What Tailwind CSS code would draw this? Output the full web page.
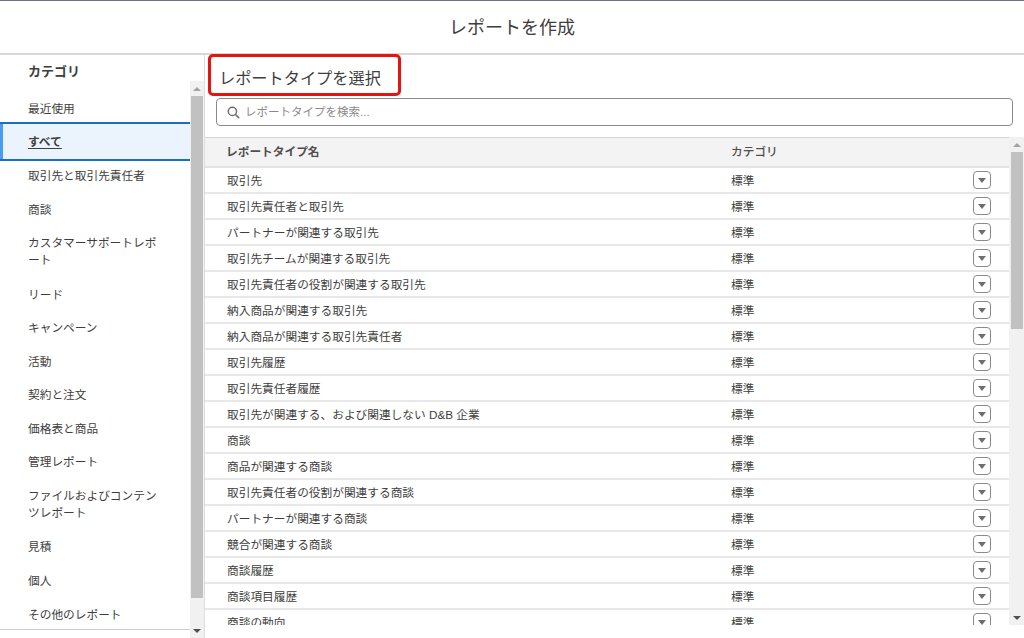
<!DOCTYPE html>
<html lang="ja">
<head>
  <meta charset="UTF-8" />
  <script src="https://cdn.jsdelivr.net/npm/@tailwindcss/browser@4"></script>
  <title>レポートを作成</title>
</head>
<body class="bg-white text-[#3e3e3c] text-[11.7px] font-['Liberation_Sans','Noto_Sans_CJK_JP',sans-serif]">
  <div class="relative w-[1024px] h-[638px] overflow-hidden flex flex-col">
    <!-- Header -->
    <header class="h-[55px] shrink-0 border-t border-t-[#6b7280] border-b-2 border-b-[#d8d8d8] flex items-center justify-center text-[18px] text-[#3e3e3c] pt-[2px]">レポートを作成</header>

    <div class="flex flex-1 min-h-0">
      <!-- Category sidebar -->
      <aside class="w-[205px] shrink-0 border-r border-[#dddddd] relative flex flex-col">
        <div class="w-[190px] h-[575px] border-b border-[#cccccc]">
          <div class="h-[34px] pl-[28px] flex items-center text-[13px] font-bold text-[#3e3e3c]">カテゴリ</div>
          <ul class="mt-[2px]">
            <li class="h-[31px] pl-[28px] pt-[5px] flex items-center">最近使用</li>
            <li class="h-[39px] pl-[28px] flex items-center bg-[#ebf3fc] border-y-2 border-[#1b6fc2] relative font-bold text-[#3e3e3c] underline underline-offset-2">
              <span class="absolute left-0 top-0 bottom-0 w-[3px] bg-[#4b9bf5]"></span>すべて
            </li>
            <li class="h-[33px] pl-[28px] pb-[4px] flex items-center">取引先と取引先責任者</li>
            <li class="h-[34px] pl-[28px] pb-[2px] flex items-center">商談</li>
            <li class="h-[50px] pl-[28px] pr-[28px] pb-[4px] flex items-center leading-[17px]">カスタマーサポートレポート</li>
            <li class="h-[34px] pl-[28px] flex items-center">リード</li>
            <li class="h-[33px] pl-[28px] pb-[2px] flex items-center">キャンペーン</li>
            <li class="h-[34px] pl-[28px] flex items-center">活動</li>
            <li class="h-[33px] pl-[28px] pb-[2px] flex items-center">契約と注文</li>
            <li class="h-[34px] pl-[28px] flex items-center">価格表と商品</li>
            <li class="h-[33px] pl-[28px] pb-[2px] flex items-center">管理レポート</li>
            <li class="h-[51px] pl-[28px] pr-[28px] pb-[2px] flex items-center leading-[17px]">ファイルおよびコンテンツレポート</li>
            <li class="h-[33px] pl-[28px] flex items-center">見積</li>
            <li class="h-[34px] pl-[28px] pt-[2px] flex items-center">個人</li>
            <li class="h-[34px] pl-[28px] pt-[2px] flex items-center">その他のレポート</li>
          </ul>
        </div>
        <!-- Sidebar scrollbar -->
        <div class="absolute right-0 top-[26px] bottom-0 w-[14px] bg-[#f1f1f1] flex flex-col items-center">
          <div class="h-[15px] w-full shrink-0 flex items-center justify-center">
            <span class="w-0 h-0 border-x-[4px] border-x-transparent border-b-[4px] border-b-[#a3a3a3]"></span>
          </div>
          <div class="w-[12px] h-[502px] bg-[#c1c1c1]"></div>
          <div class="mt-auto h-[15px] w-full shrink-0 flex items-center justify-center">
            <span class="w-0 h-0 border-x-[4px] border-x-transparent border-t-[4px] border-t-[#505050]"></span>
          </div>
        </div>
      </aside>

      <!-- Report type panel -->
      <main class="flex-1 min-w-0 flex flex-col">
        <h2 class="h-[43px] shrink-0 pl-[14px] pt-[11px] text-[16.2px] leading-[24px] text-[#3e3e3c]">レポートタイプを選択</h2>
        <div class="h-[28px] shrink-0 ml-[11px] mr-[11px] border border-[#8a8a8a] rounded-[4px] flex items-center pl-[10px] gap-[5px] pt-[1px] text-[11.5px] text-[#8a8a8a]">
          <svg class="w-[13px] h-[13px]" viewBox="0 0 12 12" fill="none" stroke="#6f6f6f" stroke-width="1.4"><circle cx="5" cy="5" r="3.8"/><path d="M7.8 7.8 11.2 11.2"/></svg>
          <span>レポートタイプを検索...</span>
        </div>

        <div class="mt-[11px] h-[488px] flex">
          <div class="flex-1 min-w-0 overflow-hidden">
            <div class="h-[31px] border-t border-[#d4d4d4] border-b-2 border-b-[#e4e4e4] bg-[#f3f3f3] flex items-center font-bold text-[#514f4d]">
              <span class="w-[526px] pl-[21px]">レポートタイプ名</span><span class="font-medium">カテゴリ</span>
            </div>
            <div class="h-[26px] border-b-2 border-[#e8e8e8] flex items-center"><span class="w-[526px] pl-[22px] pt-[2px]">取引先</span><span class="w-[242px] pt-[2px]">標準</span><button class="w-[18px] h-[18px] border border-[#8a8a8a] rounded-[4px] flex items-center justify-center"><span class="w-0 h-0 border-x-[4px] border-x-transparent border-t-[5px] border-t-[#706e6b]"></span></button></div>
            <div class="h-[26px] border-b-2 border-[#e8e8e8] flex items-center"><span class="w-[526px] pl-[22px] pt-[2px]">取引先責任者と取引先</span><span class="w-[242px] pt-[2px]">標準</span><button class="w-[18px] h-[18px] border border-[#8a8a8a] rounded-[4px] flex items-center justify-center"><span class="w-0 h-0 border-x-[4px] border-x-transparent border-t-[5px] border-t-[#706e6b]"></span></button></div>
            <div class="h-[26px] border-b-2 border-[#e8e8e8] flex items-center"><span class="w-[526px] pl-[22px] pt-[2px]">パートナーが関連する取引先</span><span class="w-[242px] pt-[2px]">標準</span><button class="w-[18px] h-[18px] border border-[#8a8a8a] rounded-[4px] flex items-center justify-center"><span class="w-0 h-0 border-x-[4px] border-x-transparent border-t-[5px] border-t-[#706e6b]"></span></button></div>
            <div class="h-[26px] border-b-2 border-[#e8e8e8] flex items-center"><span class="w-[526px] pl-[22px] pt-[2px]">取引先チームが関連する取引先</span><span class="w-[242px] pt-[2px]">標準</span><button class="w-[18px] h-[18px] border border-[#8a8a8a] rounded-[4px] flex items-center justify-center"><span class="w-0 h-0 border-x-[4px] border-x-transparent border-t-[5px] border-t-[#706e6b]"></span></button></div>
            <div class="h-[26px] border-b-2 border-[#e8e8e8] flex items-center"><span class="w-[526px] pl-[22px] pt-[2px]">取引先責任者の役割が関連する取引先</span><span class="w-[242px] pt-[2px]">標準</span><button class="w-[18px] h-[18px] border border-[#8a8a8a] rounded-[4px] flex items-center justify-center"><span class="w-0 h-0 border-x-[4px] border-x-transparent border-t-[5px] border-t-[#706e6b]"></span></button></div>
            <div class="h-[26px] border-b-2 border-[#e8e8e8] flex items-center"><span class="w-[526px] pl-[22px] pt-[2px]">納入商品が関連する取引先</span><span class="w-[242px] pt-[2px]">標準</span><button class="w-[18px] h-[18px] border border-[#8a8a8a] rounded-[4px] flex items-center justify-center"><span class="w-0 h-0 border-x-[4px] border-x-transparent border-t-[5px] border-t-[#706e6b]"></span></button></div>
            <div class="h-[26px] border-b-2 border-[#e8e8e8] flex items-center"><span class="w-[526px] pl-[22px] pt-[2px]">納入商品が関連する取引先責任者</span><span class="w-[242px] pt-[2px]">標準</span><button class="w-[18px] h-[18px] border border-[#8a8a8a] rounded-[4px] flex items-center justify-center"><span class="w-0 h-0 border-x-[4px] border-x-transparent border-t-[5px] border-t-[#706e6b]"></span></button></div>
            <div class="h-[26px] border-b-2 border-[#e8e8e8] flex items-center"><span class="w-[526px] pl-[22px] pt-[2px]">取引先履歴</span><span class="w-[242px] pt-[2px]">標準</span><button class="w-[18px] h-[18px] border border-[#8a8a8a] rounded-[4px] flex items-center justify-center"><span class="w-0 h-0 border-x-[4px] border-x-transparent border-t-[5px] border-t-[#706e6b]"></span></button></div>
            <div class="h-[26px] border-b-2 border-[#e8e8e8] flex items-center"><span class="w-[526px] pl-[22px] pt-[2px]">取引先責任者履歴</span><span class="w-[242px] pt-[2px]">標準</span><button class="w-[18px] h-[18px] border border-[#8a8a8a] rounded-[4px] flex items-center justify-center"><span class="w-0 h-0 border-x-[4px] border-x-transparent border-t-[5px] border-t-[#706e6b]"></span></button></div>
            <div class="h-[26px] border-b-2 border-[#e8e8e8] flex items-center"><span class="w-[526px] pl-[22px] pt-[2px]">取引先が関連する、および関連しない D&amp;B 企業</span><span class="w-[242px] pt-[2px]">標準</span><button class="w-[18px] h-[18px] border border-[#8a8a8a] rounded-[4px] flex items-center justify-center"><span class="w-0 h-0 border-x-[4px] border-x-transparent border-t-[5px] border-t-[#706e6b]"></span></button></div>
            <div class="h-[26px] border-b-2 border-[#e8e8e8] flex items-center"><span class="w-[526px] pl-[22px] pt-[2px]">商談</span><span class="w-[242px] pt-[2px]">標準</span><button class="w-[18px] h-[18px] border border-[#8a8a8a] rounded-[4px] flex items-center justify-center"><span class="w-0 h-0 border-x-[4px] border-x-transparent border-t-[5px] border-t-[#706e6b]"></span></button></div>
            <div class="h-[26px] border-b-2 border-[#e8e8e8] flex items-center"><span class="w-[526px] pl-[22px] pt-[2px]">商品が関連する商談</span><span class="w-[242px] pt-[2px]">標準</span><button class="w-[18px] h-[18px] border border-[#8a8a8a] rounded-[4px] flex items-center justify-center"><span class="w-0 h-0 border-x-[4px] border-x-transparent border-t-[5px] border-t-[#706e6b]"></span></button></div>
            <div class="h-[26px] border-b-2 border-[#e8e8e8] flex items-center"><span class="w-[526px] pl-[22px] pt-[2px]">取引先責任者の役割が関連する商談</span><span class="w-[242px] pt-[2px]">標準</span><button class="w-[18px] h-[18px] border border-[#8a8a8a] rounded-[4px] flex items-center justify-center"><span class="w-0 h-0 border-x-[4px] border-x-transparent border-t-[5px] border-t-[#706e6b]"></span></button></div>
            <div class="h-[26px] border-b-2 border-[#e8e8e8] flex items-center"><span class="w-[526px] pl-[22px] pt-[2px]">パートナーが関連する商談</span><span class="w-[242px] pt-[2px]">標準</span><button class="w-[18px] h-[18px] border border-[#8a8a8a] rounded-[4px] flex items-center justify-center"><span class="w-0 h-0 border-x-[4px] border-x-transparent border-t-[5px] border-t-[#706e6b]"></span></button></div>
            <div class="h-[26px] border-b-2 border-[#e8e8e8] flex items-center"><span class="w-[526px] pl-[22px] pt-[2px]">競合が関連する商談</span><span class="w-[242px] pt-[2px]">標準</span><button class="w-[18px] h-[18px] border border-[#8a8a8a] rounded-[4px] flex items-center justify-center"><span class="w-0 h-0 border-x-[4px] border-x-transparent border-t-[5px] border-t-[#706e6b]"></span></button></div>
            <div class="h-[26px] border-b-2 border-[#e8e8e8] flex items-center"><span class="w-[526px] pl-[22px] pt-[2px]">商談履歴</span><span class="w-[242px] pt-[2px]">標準</span><button class="w-[18px] h-[18px] border border-[#8a8a8a] rounded-[4px] flex items-center justify-center"><span class="w-0 h-0 border-x-[4px] border-x-transparent border-t-[5px] border-t-[#706e6b]"></span></button></div>
            <div class="h-[26px] border-b-2 border-[#e8e8e8] flex items-center"><span class="w-[526px] pl-[22px] pt-[2px]">商談項目履歴</span><span class="w-[242px] pt-[2px]">標準</span><button class="w-[18px] h-[18px] border border-[#8a8a8a] rounded-[4px] flex items-center justify-center"><span class="w-0 h-0 border-x-[4px] border-x-transparent border-t-[5px] border-t-[#706e6b]"></span></button></div>
            <div class="h-[26px] border-b-2 border-[#e8e8e8] flex items-center"><span class="w-[526px] pl-[22px] pt-[2px]">商談の動向</span><span class="w-[242px] pt-[2px]">標準</span><button class="w-[18px] h-[18px] border border-[#8a8a8a] rounded-[4px] flex items-center justify-center"><span class="w-0 h-0 border-x-[4px] border-x-transparent border-t-[5px] border-t-[#706e6b]"></span></button></div>
          </div>
          <!-- Table scrollbar -->
          <div class="w-[15px] shrink-0 bg-[#f1f1f1] flex flex-col">
            <div class="h-[15px] shrink-0 flex items-center justify-center">
              <span class="w-0 h-0 border-x-[4px] border-x-transparent border-b-[4px] border-b-[#a3a3a3]"></span>
            </div>
            <div class="ml-[2px] w-[12px] h-[177px] bg-[#c1c1c1]"></div>
            <div class="mt-auto h-[15px] shrink-0 flex items-center justify-center">
              <span class="w-0 h-0 border-x-[4px] border-x-transparent border-t-[4px] border-t-[#505050]"></span>
            </div>
          </div>
        </div>
      </main>
    </div>

    <!-- Red annotation -->
    <div class="absolute left-[208px] top-[54px] w-[193px] h-[42px] border-[3px] border-[#e5140f] rounded-[5px]"></div>
  </div>
</body>
</html>
